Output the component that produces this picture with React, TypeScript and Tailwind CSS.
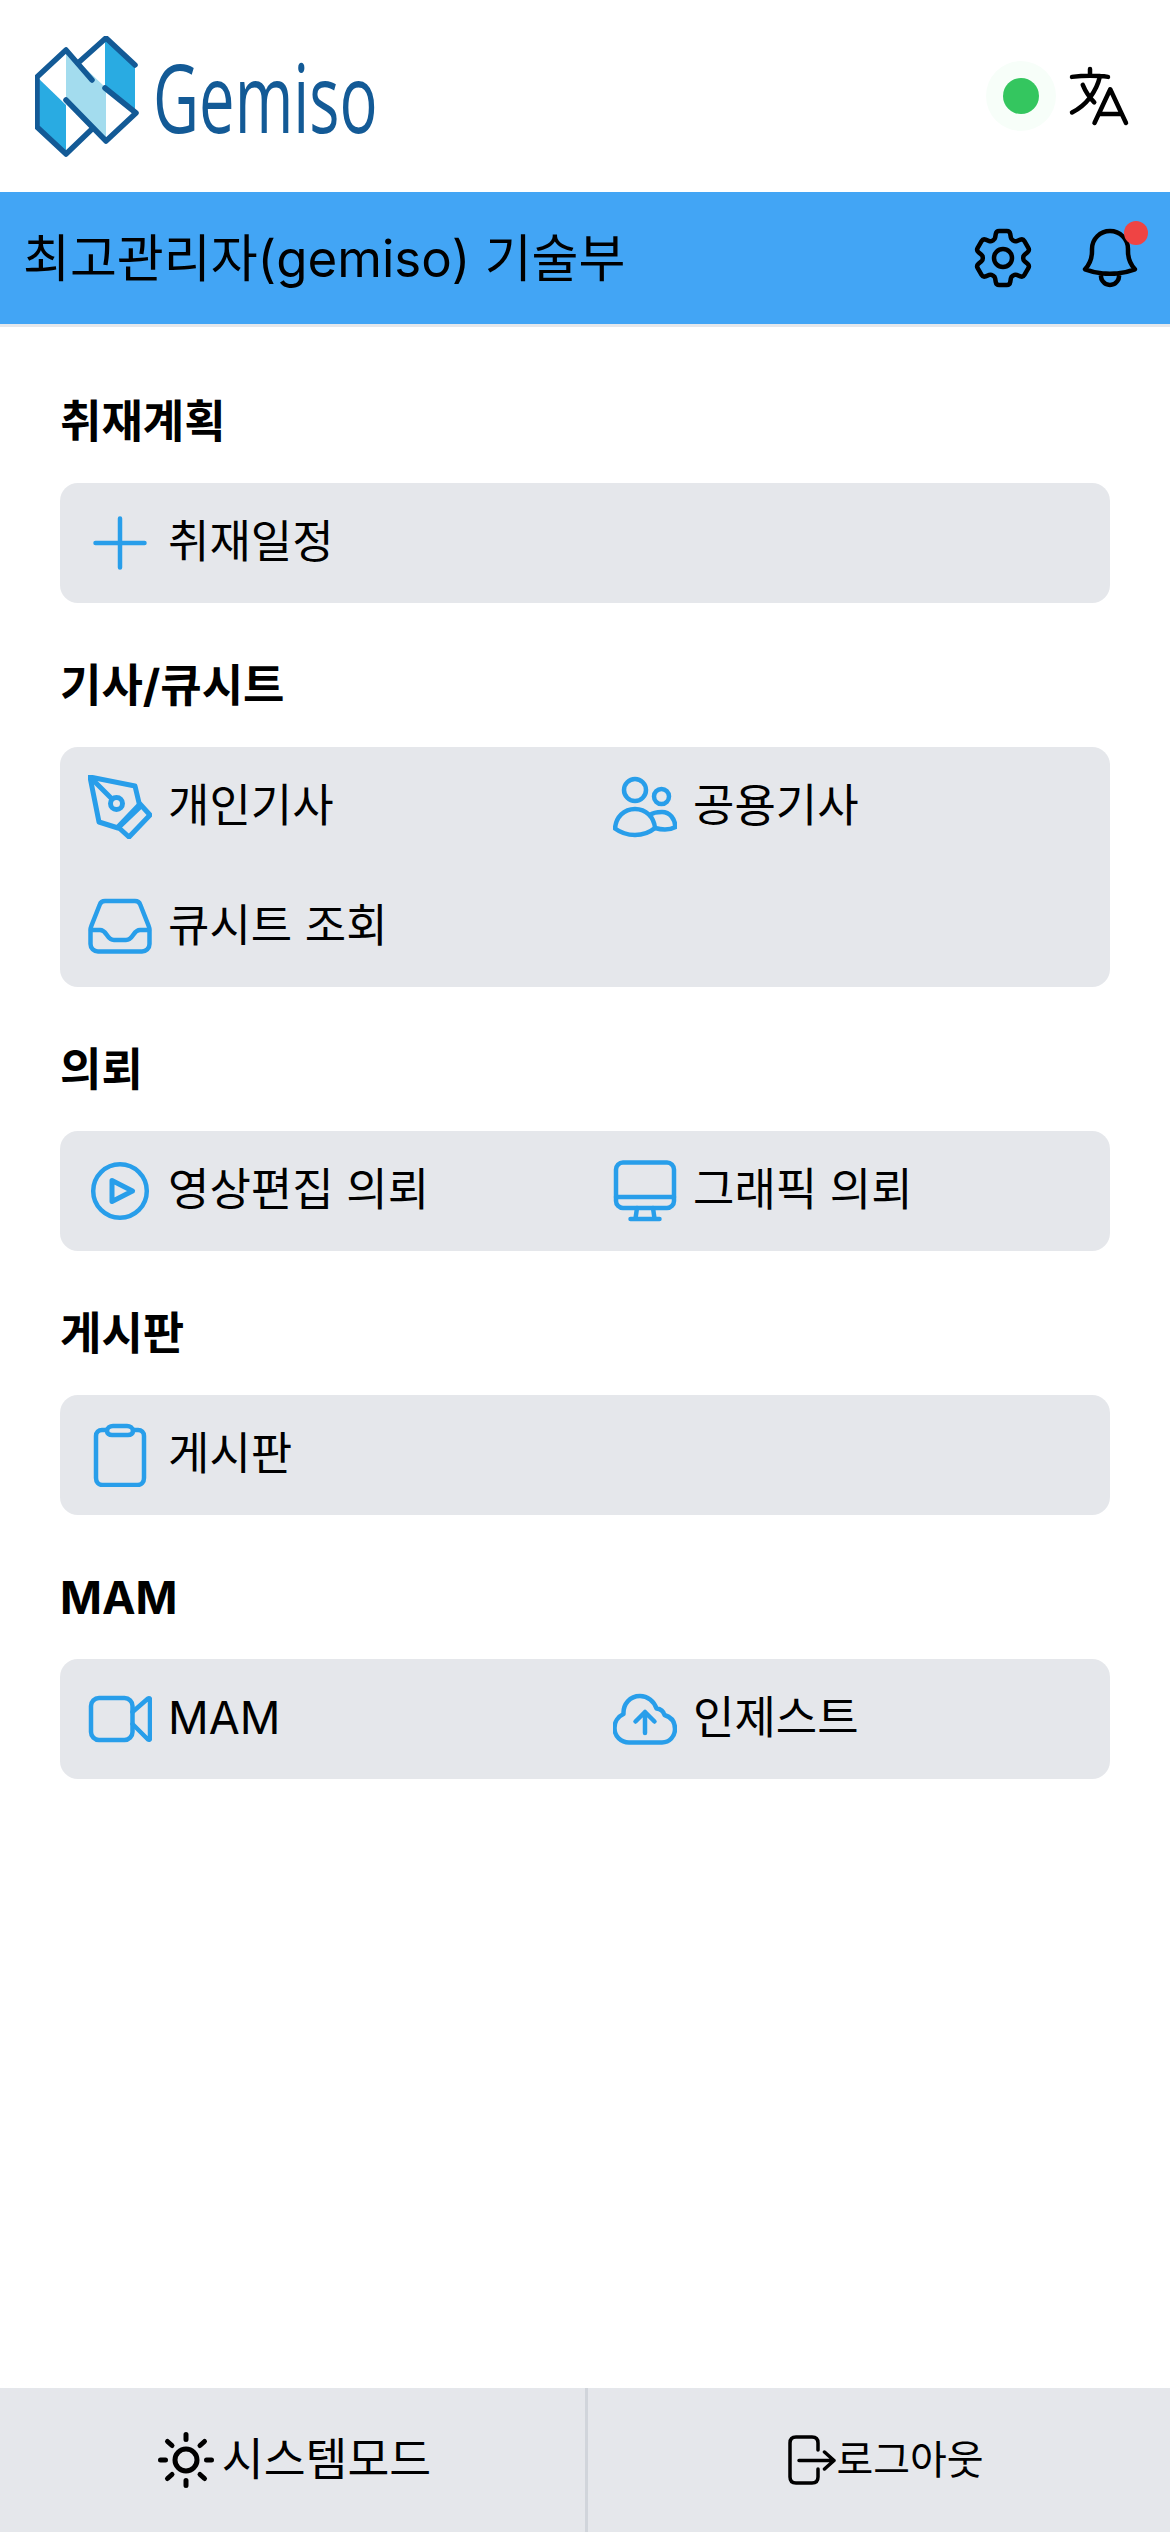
import { type ReactNode } from 'react'
import { HiOutlineBell, HiOutlineCog6Tooth, HiOutlineLanguage } from 'react-icons/hi2'

const FONT = "font-['Inter','Noto_Sans_CJK_KR',sans-serif]"

/** Blue line icon, drawn in the 64px box of a menu item. */
function Glyph({ children }: { children: ReactNode }) {
  return (
    <svg viewBox="0 0 64 64" fill="none" stroke="#289eea" strokeWidth="4.5" strokeLinecap="round" strokeLinejoin="round" className="h-16 w-16 shrink-0">
      {children}
    </svg>
  )
}

const PlusIcon = () => (
  <Glyph>
    <path d="M7.5 32H56.5M32 7.5V56.5" />
  </Glyph>
)

const PenIcon = () => (
  <Glyph>
    <path strokeWidth="5" d="M2 2L47 11L52 32L30 53L11 47Z" />
    <path strokeWidth="5" d="M2 2L24 24" />
    <circle strokeWidth="5" cx="28.5" cy="28.5" r="6" />
    <path strokeWidth="5" d="M52 29L62 40L41 62L30 52Z" />
  </Glyph>
)

const InboxIcon = () => (
  <Glyph>
    <path d="M17 6H47C49.5 6 51.5 7.5 52.2 9.5L60.5 30.5C61.3 32.5 61.5 33.5 61.5 35V49C61.5 53.5 58 56.5 54 56.5H10C6 56.5 2.5 53.5 2.5 49V35C2.5 33.5 2.7 32.5 3.5 30.5L11.8 9.5C12.5 7.5 14.5 6 17 6Z" />
    <path d="M3 35H12C15 35 16.500 36.500 18.500 39.500C20.500 42.500 22.500 45 26 45H38C41.500 45 43.500 42.500 45.500 39.500C47.500 36.500 49 35 52 35H61" />
  </Glyph>
)

const UsersIcon = () => (
  <Glyph>
    <circle cx="22" cy="15" r="11" />
    <circle cx="48.500" cy="21.500" r="7.500" />
    <path d="M2 53.500C3 42 11 34 22 34C33 34 41 42 42 53C36 58 29 60 22 60C15 60 8 58 2 53.500Z" />
    <path d="M37 40C40 37.500 45 37 49 37C57 37 62 44 62.500 52C57 55 49 55 42 53" />
  </Glyph>
)

const PlayIcon = () => (
  <Glyph>
    <circle cx="32" cy="32" r="26.800" />
    <path strokeWidth="5" d="M24 21.500L44.500 32L24 42.500Z" />
  </Glyph>
)

const MonitorIcon = () => (
  <Glyph>
    <rect x="3" y="3.500" width="58" height="45.500" rx="7" />
    <path d="M3 38H61" />
    <path d="M24 49L22.500 59.500M40 49L41.500 59.500M17.500 60H46.500" />
  </Glyph>
)

const ClipboardIcon = () => (
  <Glyph>
    <path d="M19 7H14C10.500 7 8 9.500 8 13V55C8 59 10.500 62 14.500 62H49.500C53.500 62 56 59 56 55V13C56 9.500 53.500 7 50 7H45" />
    <path d="M25 3H39C42 3 45 5 45 8C45 10.500 43 12 40 12H24C21 12 19 10.500 19 8C19 5 22 3 25 3Z" />
  </Glyph>
)

const VideoIcon = () => (
  <Glyph>
    <rect x="3" y="11" width="41.500" height="42" rx="8" />
    <path d="M44.500 25L60 11.500C61 10.800 62 11.300 62 12.500V51.500C62 52.700 61 53.200 60 52.500L44.500 37" />
  </Glyph>
)

const CloudIcon = () => (
  <Glyph>
    <path d="M16 55.500H49C56.500 55.500 62 49.500 62 42C62 35 58 30 51.500 28C50.500 24.500 47.500 22 43.500 21.500C41 14 34.500 9 27 9C17 9 10 17 10.500 27C5 29.500 1.500 35 1.500 41C1.500 49.500 8 55.500 16 55.500Z" />
    <path d="M32 46V25M22.500 34.500L32 25L41.500 34.500" />
  </Glyph>
)

const SunIcon = () => (
  <svg viewBox="0 0 64 64" fill="none" stroke="#000" strokeWidth="5" strokeLinecap="round" className="h-16 w-16 shrink-0">
    <circle cx="32" cy="32" r="11" />
    <path d="M32 6.500V11.500M32 52.500V57.500M6.500 32H11.500M52.500 32H57.500M13.500 13.500L18 17.500M46 46.500L50.500 50.500M13.500 50.500L18 46.500M46 17.500L50.500 13.500" />
  </svg>
)

const LogoutIcon = () => (
  <svg viewBox="0 0 48 50" fill="none" stroke="#000" strokeWidth="3.500" strokeLinecap="round" strokeLinejoin="round" className="h-[50px] w-12 shrink-0">
    <path d="M30 15V8C30 4 27.500 2 24 2H8C4.500 2 2 4 2 8V42C2 46 4.500 48 8 48H24C27.500 48 30 46 30 42V34" />
    <path d="M11 25.500H46M36.500 17L46 25.500L36.500 34" />
  </svg>
)

function Logo() {
  return (
    <svg viewBox="0 0 106 124" className="mt-1 h-[124px] w-[106px] shrink-0" fill="none">
      <path d="M31 14L71 52V105L31 65Z" fill="#a3dcee" />
      <path d="M71 2L100 29V77L70 52V2Z" fill="#29abe2" />
      <path d="M2 41L31 69V118L2 91Z" fill="#29abe2" />
      <g stroke="#135a96" strokeWidth="5.500" strokeLinecap="round" strokeLinejoin="round">
        <path d="M57 44L31 14L2 41V91L31 118L57 93" />
        <path d="M43 27L71 2L100 29" />
        <path d="M31 64L71 105L101 77L70 52" />
      </g>
    </svg>
  )
}

function Item({ icon, label }: { icon: ReactNode; label: string }) {
  return (
    <div className="flex h-[120px] items-center gap-4 pl-7">
      {icon}
      <span className="mb-[3px] text-[45px] leading-none text-black">{label}</span>
    </div>
  )
}

function Section({ title, children }: { title: string; children: ReactNode }) {
  return (
    <section>
      <h2 className="pt-[47px] pb-[25px] pl-[60px] text-[45px] leading-[72px] font-bold text-black">{title}</h2>
      <div className="mx-[60px] grid grid-cols-2 rounded-[18px] bg-[#e5e7eb]">{children}</div>
    </section>
  )
}

export default function App() {
  return (
    <div className={`flex h-[2532px] w-[1170px] flex-col overflow-hidden bg-white ${FONT}`}>
      <header className="flex h-48 shrink-0 items-center justify-between pr-[35px] pl-[35px]">
        <div className="flex items-center">
          <Logo />
          {/* the wordmark is a condensed face, squeezed from Open Sans */}
          <span className="ml-3 origin-left scale-x-[0.66] font-['Open_Sans',sans-serif] text-[96px] leading-none text-[#135a96]">Gemiso</span>
        </div>
        <div className="flex items-center gap-[7px]">
          <div className="flex h-[70px] w-[70px] items-center justify-center rounded-full bg-[#f7fef9]">
            <div className="h-9 w-9 rounded-full bg-[#34c65f]" />
          </div>
          <HiOutlineLanguage className="h-[72px] w-[72px] text-black" />
        </div>
      </header>

      <div className="flex h-[135px] shrink-0 items-center justify-between border-b-[3px] border-[#e5e7eb] bg-[#42a5f5] pr-6 pl-[23px]">
        <span className="text-[51px] leading-none text-black">최고관리자(gemiso) 기술부</span>
        <div className="flex items-center gap-[35px]">
          <HiOutlineCog6Tooth className="h-[72px] w-[72px] text-black" />
          <div className="relative">
            <HiOutlineBell className="h-[72px] w-[72px] text-black" />
            <span className="absolute top-[-1px] right-[-2px] h-6 w-6 rounded-full bg-[#ef4444]" />
          </div>
        </div>
      </div>

      <main className="flex-1 pt-3">
        <Section title="취재계획">
          <Item icon={<PlusIcon />} label="취재일정" />
        </Section>
        <Section title="기사/큐시트">
          <Item icon={<PenIcon />} label="개인기사" />
          <Item icon={<UsersIcon />} label="공용기사" />
          <Item icon={<InboxIcon />} label="큐시트 조회" />
        </Section>
        <Section title="의뢰">
          <Item icon={<PlayIcon />} label="영상편집 의뢰" />
          <Item icon={<MonitorIcon />} label="그래픽 의뢰" />
        </Section>
        <Section title="게시판">
          <Item icon={<ClipboardIcon />} label="게시판" />
        </Section>
        <Section title="MAM">
          <Item icon={<VideoIcon />} label="MAM" />
          <Item icon={<CloudIcon />} label="인제스트" />
        </Section>
      </main>

      <footer className="flex h-36 shrink-0 bg-[#e5e7eb]">
        <div className="box-content flex w-[585px] items-center justify-center gap-[4px] border-r-[3px] border-[#d1d5db] pl-0">
          <SunIcon />
          <span className="text-[45.500px] leading-none text-black">시스템모드</span>
        </div>
        <div className="flex flex-1 items-center justify-center pl-[14px]">
          <LogoutIcon />
          <span className="text-[40px] leading-none text-black">로그아웃</span>
        </div>
      </footer>
    </div>
  )
}
